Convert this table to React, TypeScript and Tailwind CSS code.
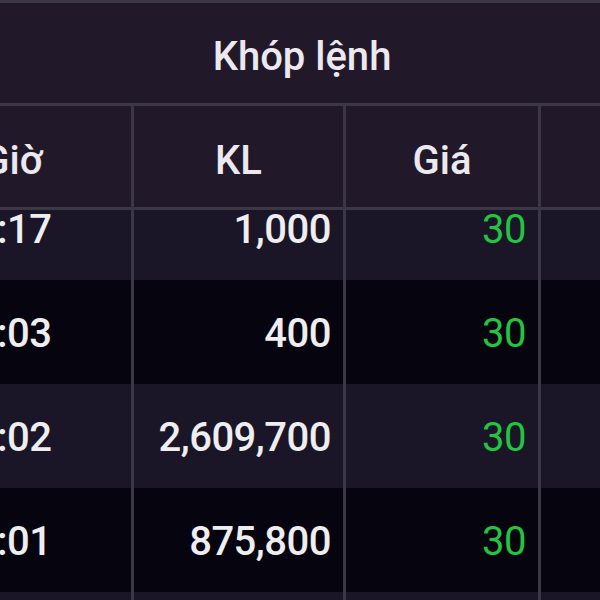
import React from "react";

const rows = [
  { t: "14:45:17", kl: "1,000", p: "30" },
  { t: "14:45:03", kl: "400", p: "30" },
  { t: "14:45:02", kl: "2,609,700", p: "30" },
  { t: "14:45:01", kl: "875,800", p: "30" },
  { t: "14:44:58", kl: "12,300", p: "30" },
];

export default function App() {
  return (
    <div
      className="w-[600px] h-[600px] overflow-hidden bg-[#05040f]"
      style={{ fontFamily: "Roboto, 'Noto Sans', sans-serif" }}
    >
      <div className="w-[832px] -ml-[114px] h-[600px] flex flex-col">
        {/* header */}
        <div className="border-t-[3px] border-b-[3px] border-[#3b3744] bg-[#211829] text-[#ebe9ef] font-medium text-[40px] leading-none">
          <div className="h-[103px] flex items-center justify-center pt-2 border-b-[3px] border-[#3b3744]">
            Khóp lệnh
          </div>
          <div className="grid grid-cols-[248px_212px_195px_177px] h-[101px]">
            <div className="flex items-center justify-center pt-2 pl-2 border-r-[3px] border-[#3b3744]">Giờ</div>
            <div className="flex items-center justify-center pt-2 border-r-[3px] border-[#3b3744]">KL</div>
            <div className="flex items-center justify-center pt-2 border-r-[3px] border-[#3b3744]">Giá</div>
            <div className="flex items-center justify-center pt-2 border-r-[3px] border-[#3b3744]"></div>
          </div>
        </div>
        {/* body */}
        <div className="flex-1 overflow-hidden">
          <div className="-mt-[34px]">
            {rows.map((r, i) => (
              <div
                key={i}
                className={
                  "grid grid-cols-[248px_212px_195px_177px] h-[104px] text-[40px] leading-none font-medium tracking-[-0.5px] " +
                  (i % 2 === 0 ? "bg-[#1a1627]" : "bg-[#05040f]")
                }
              >
                <div className="flex items-center pl-3 pt-[3px] border-r-[3px] border-[#3b3744] text-[#eeedf0]">{r.t}</div>
                <div className="flex items-center justify-end pr-3 pt-[3px] border-r-[3px] border-[#3b3744] text-[#eeedf0]">{r.kl}</div>
                <div className="flex items-center justify-end pr-3 pt-[3px] border-r-[3px] border-[#3b3744] text-[#22c440] font-normal">{r.p}</div>
                <div className="border-r-[3px] border-[#3b3744]"></div>
              </div>
            ))}
          </div>
        </div>
      </div>
    </div>
  );
}
